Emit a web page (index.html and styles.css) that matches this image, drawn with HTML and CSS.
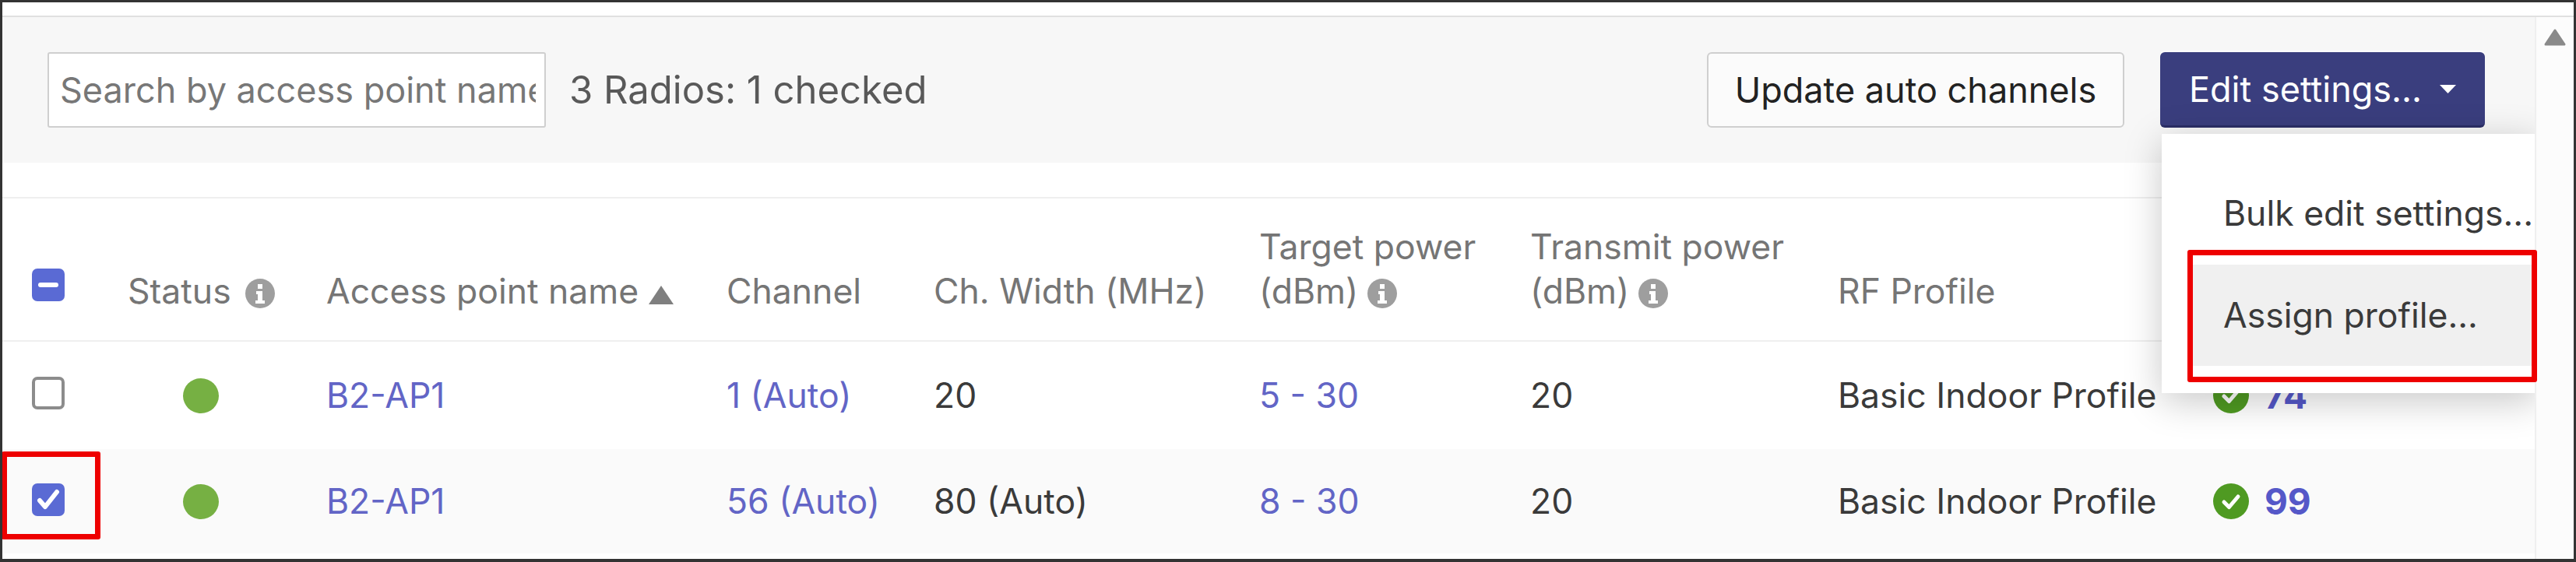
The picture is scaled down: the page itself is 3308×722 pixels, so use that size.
FILE: index.html
```html
<!DOCTYPE html>
<html lang="en">
<head>
<meta charset="utf-8">
<title>Radios</title>
<link rel="stylesheet" href="styles.css">
</head>
<body>
<div class="frame">
  <div class="topbar"></div>
  <div class="body">
    <main class="main">
      <section class="toolbar">
        <input class="search" type="text" placeholder="Search by access point name">
        <span class="count">3 Radios: 1 checked</span>
        <div class="actions">
          <button class="btn">Update auto channels</button>
          <button class="btn primary">Edit settings...<svg class="caret" viewBox="0 0 21 11"><polygon points="0,0 21,0 10.5,11"/></svg></button>
        </div>
      </section>
      <div class="gap"></div>
      <div class="grid head">
        <span class="box on head-box"><svg viewBox="0 0 42 42"><path d="M11 21h20" class="mark"/></svg></span>
        <span>Status<svg class="info wide" viewBox="0 0 38 38"><circle cx="19" cy="19" r="19"/><path class="i" d="M16 7h6v6h-6zM14 16h8v12h3v4H13v-4h3v-8h-2z"/></svg></span>
        <span>Access point name<svg class="sort" viewBox="0 0 32 24"><polygon points="16,0 32,24 0,24"/></svg></span>
        <span>Channel</span>
        <span>Ch. Width (MHz)</span>
        <span>Target power<br>(dBm)<svg class="info" viewBox="0 0 38 38"><circle cx="19" cy="19" r="19"/><path class="i" d="M16 7h6v6h-6zM14 16h8v12h3v4H13v-4h3v-8h-2z"/></svg></span>
        <span>Transmit power<br>(dBm)<svg class="info" viewBox="0 0 38 38"><circle cx="19" cy="19" r="19"/><path class="i" d="M16 7h6v6h-6zM14 16h8v12h3v4H13v-4h3v-8h-2z"/></svg></span>
        <span>RF Profile</span>
        <span></span>
      </div>
      <div class="grid row first">
        <span class="box"></span>
        <span class="dot"></span>
        <a class="link">B2-AP1</a>
        <a class="link">1 (Auto)</a>
        <span>20</span>
        <a class="link">5 - 30</a>
        <span>20</span>
        <span>Basic Indoor Profile</span>
        <span class="score"><svg class="ok" viewBox="0 0 46 46"><circle cx="23" cy="23" r="23"/><path d="M14 24l6.500 6.500L32 17"/></svg><b>74</b></span>
      </div>
      <div class="grid row second">
        <span class="box on"><svg viewBox="0 0 42 42"><path d="M10 22l7 8L32 11" class="mark"/></svg></span>
        <span class="dot"></span>
        <a class="link">B2-AP1</a>
        <a class="link">56 (Auto)</a>
        <span>80 (Auto)</span>
        <a class="link">8 - 30</a>
        <span>20</span>
        <span>Basic Indoor Profile</span>
        <span class="score"><svg class="ok" viewBox="0 0 46 46"><circle cx="23" cy="23" r="23"/><path d="M14 24l6.500 6.500L32 17"/></svg><b>99</b></span>
      </div>
      <div class="menu">
        <div class="item">Bulk edit settings...</div>
        <div class="item hover">Assign profile...</div>
      </div>
    </main>
    <aside class="scroll">
      <svg class="arrow" viewBox="0 0 28 23"><path d="M14 2L26 20H2z"/></svg>
    </aside>
  </div>
  <div class="mark-red one"></div>
  <div class="mark-red two"></div>
</div>
</body>
</html>
```

FILE: styles.css
```css
* { box-sizing: border-box; }
html, body { margin: 0; padding: 0; background: #fff; }
body { font-family: Inter, "Liberation Sans", sans-serif; font-size: 44.5px; line-height: 57px; color: #3a3a3a; }
.frame { position: relative; width: 3308px; height: 722px; border: solid #333; border-width: 3px 3px 4px; overflow: hidden; background: #fff; }
.topbar { height: 19px; border-bottom: 2px solid #e0e0e0; }
.body { display: flex; height: 696px; }
.main { position: relative; width: 3254px; flex: none; overflow: hidden; border-right: 2px solid #efefef; }
.scroll { flex: 1; background: #fcfcfc; padding: 15px 0 0 10px; }
.arrow { display: block; width: 28px; height: 23px; }
.arrow path { fill: #8a8a8a; stroke: #8a8a8a; stroke-width: 3px; stroke-linejoin: round; }

.toolbar { display: flex; align-items: center; height: 187px; padding: 0 64px 0 58px; background: #f7f7f7; }
.search { width: 640px; height: 97px; padding: 0 11px 0 14px; border: 2px solid #cfcfcf; border-radius: 3px; background: #fff; font: inherit; font-size: 45px; color: #777; outline: 0; }
.search::placeholder { color: #777; opacity: 1; }
.count { margin-left: 30px; font-size: 49px; color: #595959; }
.actions { display: flex; gap: 46px; margin-left: auto; }
.btn { width: 536px; height: 97px; padding: 0; border: 2px solid #cfcfcf; border-radius: 6px; background: #fbfbfb; font: inherit; font-size: 45px; color: #222; }
.primary { display: flex; align-items: center; justify-content: center; width: 417px; border: 0; border-bottom: 3px solid #2b2e66; background: #3a3e7e; color: #fff; box-shadow: 0 -2px 0 #fff; }
.caret { width: 21px; height: 11px; margin-left: 23px; flex: none; }
.caret polygon { fill: #fff; }

.gap { height: 46px; border-bottom: 2px solid #efefef; }
.grid { display: grid; grid-template-columns: 123px 255px 514px 266px 418px 348px 395px 482px 1fr; padding-left: 38px; }
.head { height: 184px; padding-bottom: 34px; align-items: end; color: #757575; border-bottom: 2px solid #efefef; }
.row { align-items: center; }
.first { height: 138px; }
.second { height: 134px; background: #fafafa; }

.box { display: block; width: 42px; height: 42px; border: 4px solid #8c8c8c; border-radius: 7px; background: #fff; margin-top: -7px; }
.box.on { border: 0; background: #5a6ad4; }
.box svg { display: block; width: 42px; height: 42px; }
.mark { fill: none; stroke: #fff; stroke-width: 6px; stroke-linecap: round; stroke-linejoin: round; }
.head-box { margin: 0 0 16px; }
.second .box { margin-top: -5px; }

.dot { display: block; width: 46px; height: 45px; margin-left: 71px; border-radius: 50%; background: #76b043; }
.link { color: #6265c6; }
.info { width: 38px; height: 38px; margin-left: 12px; vertical-align: -6px; }
.wide { margin-left: 18px; }
.info circle { fill: #9e9e9e; }
.info .i { fill: #fff; }
.sort { width: 32px; height: 24px; margin-left: 13px; vertical-align: -1px; }
.sort polygon { fill: #7f7f7f; }
.score { display: flex; align-items: center; gap: 20px; }
.score b { font-size: 46px; color: #5558c8; font-weight: 700; }
.ok { width: 46px; height: 46px; flex: none; }
.ok circle { fill: #4f9a22; }
.ok path { fill: none; stroke: #fff; stroke-width: 5px; stroke-linecap: round; stroke-linejoin: round; }

.menu { position: absolute; left: 2773px; top: 150px; width: 484px; height: 333px; padding-top: 37px; background: #fff; box-shadow: 0 10px 45px rgba(0, 0, 0, 0.22); }
.item { height: 131px; line-height: 131px; margin-left: 39px; padding-left: 40px; white-space: nowrap; }
.hover { height: 130px; line-height: 130px; background: #f0f0f0; }

.mark-red { position: absolute; border: 7px solid #ee0000; border-radius: 3px; }
.one { left: -1px; top: 577px; width: 127px; height: 113px; }
.two { left: 2806px; top: 318px; width: 449px; height: 170px; }
```
